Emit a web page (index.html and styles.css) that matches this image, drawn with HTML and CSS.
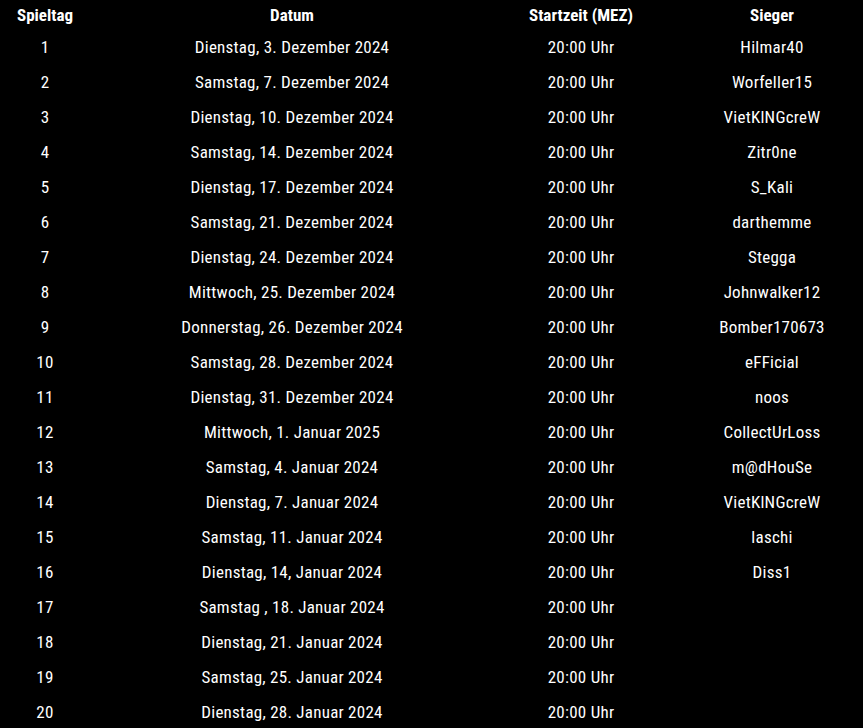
FILE: index.html
```html
<!DOCTYPE html>
<html lang="de">

<head>
    <meta charset="UTF-8">
    <meta name="viewport" content="width=device-width, initial-scale=1.0">
    <title>Spielplan</title>
    <link rel="stylesheet" href="styles.css">
</head>

<body>
    <div class="wrap">
        <table class="plan">
            <colgroup>
                <col class="c-tag">
                <col class="c-datum">
                <col class="c-zeit">
                <col class="c-sieger">
            </colgroup>
            <thead>
                <tr>
                    <th>Spieltag</th>
                    <th>Datum</th>
                    <th>Startzeit (MEZ)</th>
                    <th>Sieger</th>
                </tr>
            </thead>
            <tbody>
                <tr><td>1</td><td>Dienstag, 3. Dezember 2024</td><td>20:00 Uhr</td><td>Hilmar40</td></tr>
                <tr><td>2</td><td>Samstag, 7. Dezember 2024</td><td>20:00 Uhr</td><td>Worfeller15</td></tr>
                <tr><td>3</td><td>Dienstag, 10. Dezember 2024</td><td>20:00 Uhr</td><td>VietKlNGcreW</td></tr>
                <tr><td>4</td><td>Samstag, 14. Dezember 2024</td><td>20:00 Uhr</td><td>Zitr0ne</td></tr>
                <tr><td>5</td><td>Dienstag, 17. Dezember 2024</td><td>20:00 Uhr</td><td>S_Kali</td></tr>
                <tr><td>6</td><td>Samstag, 21. Dezember 2024</td><td>20:00 Uhr</td><td>darthemme</td></tr>
                <tr><td>7</td><td>Dienstag, 24. Dezember 2024</td><td>20:00 Uhr</td><td>Stegga</td></tr>
                <tr><td>8</td><td>Mittwoch, 25. Dezember 2024</td><td>20:00 Uhr</td><td>Johnwalker12</td></tr>
                <tr><td>9</td><td>Donnerstag, 26. Dezember 2024</td><td>20:00 Uhr</td><td>Bomber170673</td></tr>
                <tr><td>10</td><td>Samstag, 28. Dezember 2024</td><td>20:00 Uhr</td><td>eFFicial</td></tr>
                <tr><td>11</td><td>Dienstag, 31. Dezember 2024</td><td>20:00 Uhr</td><td>noos</td></tr>
                <tr><td>12</td><td>Mittwoch, 1. Januar 2025</td><td>20:00 Uhr</td><td>CollectUrLoss</td></tr>
                <tr><td>13</td><td>Samstag, 4. Januar 2024</td><td>20:00 Uhr</td><td>m@dHouSe</td></tr>
                <tr><td>14</td><td>Dienstag, 7. Januar 2024</td><td>20:00 Uhr</td><td>VietKlNGcreW</td></tr>
                <tr><td>15</td><td>Samstag, 11. Januar 2024</td><td>20:00 Uhr</td><td>laschi</td></tr>
                <tr><td>16</td><td>Dienstag, 14, Januar 2024</td><td>20:00 Uhr</td><td>Diss1</td></tr>
                <tr><td>17</td><td>Samstag , 18. Januar 2024</td><td>20:00 Uhr</td><td></td></tr>
                <tr><td>18</td><td>Dienstag, 21. Januar 2024</td><td>20:00 Uhr</td><td></td></tr>
                <tr><td>19</td><td>Samstag, 25. Januar 2024</td><td>20:00 Uhr</td><td></td></tr>
                <tr><td>20</td><td>Dienstag, 28. Januar 2024</td><td>20:00 Uhr</td><td></td></tr>
            </tbody>
        </table>
    </div>
</body>

</html>
```
FILE: styles.css
```css
html, body {
    margin: 0;
    background: #000;
    overflow: hidden;
}

.wrap {
    width: 863px;
    overflow: hidden;
}

.plan {
    width: 876px;
    border-collapse: collapse;
    table-layout: fixed;
    font-family: Roboto, "Liberation Sans", sans-serif;
    font-stretch: 75%;
    font-size: 17px;
    letter-spacing: 0.25px;
    color: #fff;
}

.c-tag { width: 90px; }
.c-datum { width: 404px; }
.c-zeit { width: 174px; }
.c-sieger { width: 208px; }

.plan th {
    height: 29px;
    padding: 0;
    font-weight: bold;
    letter-spacing: 0;
    text-align: center;
}

.plan td {
    height: 35px;
    padding: 0;
    text-align: center;
}
```
